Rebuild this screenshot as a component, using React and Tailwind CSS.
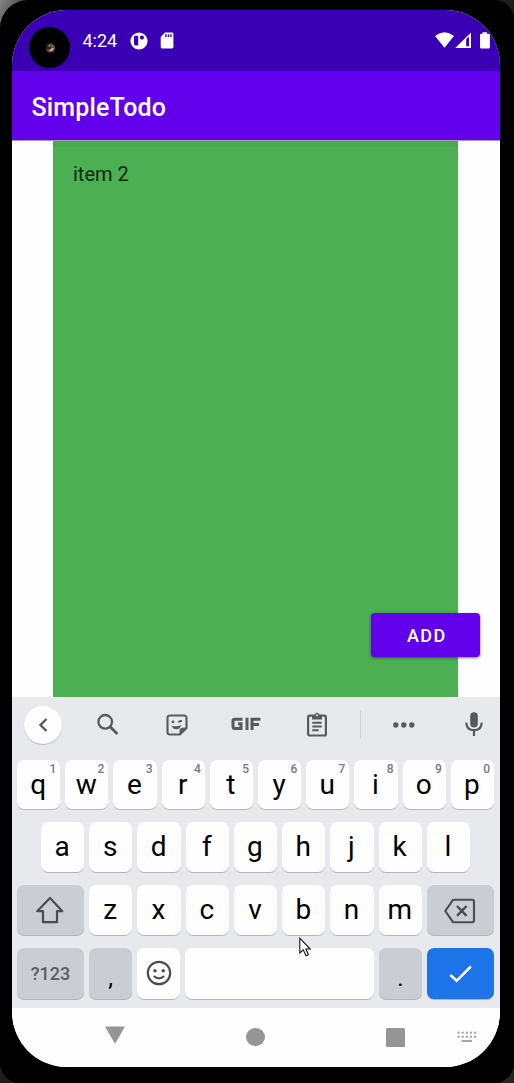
import React from "react";

function Key({ children, hint, tone = "bg-[#fefefe]", size = "flex-1" }) {
  return (
    <div className={`relative flex h-full min-w-0 items-center justify-center rounded-[7px] text-[28px] text-black shadow-[0_1px_0.5px_#b5b6bb] ${tone} ${size}`}>
      {children}
      {hint && <span className="absolute right-[4px] top-[3px] text-[12px] leading-[13px] font-medium text-[#77787b]">{hint}</span>}
    </div>
  );
}

function Letter({ children }) {
  return <span className="relative -left-[0.5px] leading-none">{children}</span>;
}

function StatusBar() {
  return (
    <div className="flex h-[61px] shrink-0 items-start bg-[#3a00b3] text-white">
      <div className="ml-[17px] mt-[17px] flex h-[41px] w-[41px] shrink-0 items-center justify-center rounded-full bg-black">
        <svg width="12" height="12" viewBox="0 0 12 12">
          <circle cx="6.5" cy="6" r="4.6" fill="#6b5147" />
          <circle cx="4.5" cy="5" r="2.6" fill="#282022" />
          <path d="M5 8.5Q8 10 10 6.5L8 6Z" fill="#d9ad91" />
          <circle cx="5.5" cy="4" r="1" fill="#a58b7c" />
        </svg>
      </div>
      <span className="ml-[12.5px] mt-[20px] w-[36px] text-[18px] leading-[21px]">4:24</span>
      <svg className="ml-[11.5px] mt-[22px]" width="18" height="18" viewBox="0 0 18 18">
        <circle cx="9" cy="9" r="8.6" fill="white" />
        <path d="M4 5.2Q4 3.8 5.4 3.8H8.2V13.5H5.8Q4 13.5 4 11.7Z" fill="#3a00b3" />
        <circle cx="11.9" cy="5.6" r="2.1" fill="#3a00b3" />
      </svg>
      <svg className="ml-[12px] mt-[22px]" width="15" height="18" viewBox="0 0 15 18">
        <path d="M5 .6H12Q13.4 .6 13.4 2V15Q13.4 16.4 12 16.4H2Q.7 16.4 .7 15V5Z" fill="white" />
        <path d="M5.9 2.3V5M8.4 2.3V5M10.9 2.3V5" stroke="#3a00b3" strokeWidth="1.4" />
      </svg>
      <svg className="ml-auto mr-[9px] mt-[22px]" width="57" height="18" viewBox="0 0 57 18">
        <path d="M1 4Q10.5-3.3 20 4L10.5 15.8Z" fill="white" />
        <path d="M21.2 16L37 .4V16Z" fill="white" />
        <path d="M32.2 7.2L35 4.5V14.3H32.2Z" fill="#3a00b3" />
        <path d="M48.5.3H53V1.7H54.7Q55.9 1.7 55.9 2.9V15.3Q55.9 16.5 54.7 16.5H47.2Q46 16.5 46 15.3V2.9Q46 1.7 47.2 1.7H48.5Z" fill="white" />
      </svg>
    </div>
  );
}

function Suggestions() {
  return (
    <div className="flex h-[55px] items-center text-[#58595b]">
      <div className="ml-[12px] flex h-[38px] w-[38px] items-center justify-center rounded-full bg-[#fefefe] shadow-[0_1px_1px_#b8b9bd]">
        <svg width="20" height="20" viewBox="0 0 20 20" fill="none" stroke="currentColor" strokeWidth="2.4"><path d="M13.5 4L7.5 10L13.5 16" /></svg>
      </div>
      <svg className="ml-[34px]" width="23" height="23" viewBox="0 0 23 23" fill="none" stroke="currentColor">
        <circle cx="9.2" cy="8.8" r="6.8" strokeWidth="2.3" /><path d="M14.1 13.7L21.4 21" strokeWidth="2.8" />
      </svg>
      <svg className="ml-[47px]" width="22" height="22" viewBox="0 0 22 22" fill="none" stroke="currentColor">
        <path d="M4 1.5H18Q20.5 1.5 20.5 4V14L14 20.5H4Q1.5 20.5 1.5 18V4Q1.5 1.5 4 1.5Z" strokeWidth="2.1" />
        <path d="M14 20.5V16.5Q14 14.2 16.3 14.2H20.5Z" fill="currentColor" strokeWidth="1" />
        <circle cx="7" cy="7.8" r="1.4" fill="currentColor" stroke="none" />
        <path d="M12.5 8.3Q14 6.3 16 7.3" strokeWidth="2" />
        <path d="M5.5 11.7Q10.5 13 15.2 11Q14 15.2 10.6 15.2Q7 15.2 5.5 11.7Z" fill="currentColor" stroke="none" />
      </svg>
      <svg className="relative -top-px ml-[43px]" width="30" height="14" viewBox="0 0 30 14" fill="none" stroke="currentColor" strokeWidth="3">
        <path d="M11.5 2.2H4Q2 2.2 2 4V9.5Q2 11.5 4 11.5H10V6.7H7" /><path d="M16 .7V13" /><path d="M21 13V2.2H29.5M21 7.4H28" />
      </svg>
      <svg className="ml-[45px]" width="22" height="25" viewBox="0 0 22 25" fill="none" stroke="currentColor">
        <rect x="2.1" y="3.7" width="17.8" height="19.8" rx="1.5" strokeWidth="2.2" />
        <path d="M6 3H8.5Q9 .8 11 .8T13.5 3H16V7.5H6Z" fill="currentColor" stroke="none" />
        <circle cx="11" cy="3.3" r="1" fill="#e8e9ed" stroke="none" />
        <path d="M6.3 10.7H15.7M6.3 14.5H15.7M6.3 18.3H12.7" strokeWidth="2" />
      </svg>
      <span className="ml-[32px] h-[28px] w-px bg-[#d0d1d6]" />
      <svg className="ml-[32px]" width="22" height="6" viewBox="0 0 22 6" fill="currentColor">
        <circle cx="2.8" cy="3" r="2.7" /><circle cx="10.8" cy="3" r="2.7" /><circle cx="18.8" cy="3" r="2.7" />
      </svg>
      <svg className="relative -top-[0.5px] ml-[50px]" width="18" height="26" viewBox="0 0 18 26" fill="none" stroke="currentColor">
        <rect x="5.2" y="1.3" width="7.6" height="15.2" rx="3.8" fill="currentColor" stroke="none" />
        <path d="M1.3 11.5Q1.3 19.2 9 19.2T16.7 11.5M9 19V25" strokeWidth="2.2" />
      </svg>
    </div>
  );
}

function Keyboard() {
  return (
    <div className="h-[311px] shrink-0 bg-[#e8e9ed] pl-[5px] pr-[6px]">
      <div className="-ml-[5px] -mr-[6px]"><Suggestions /></div>
      <div className="mt-[8px] flex h-[49px] gap-[5px]">
        {"qwertyuiop".split("").map((c, i) => <Key key={c} hint={String((i + 1) % 10)}><Letter>{c}</Letter></Key>)}
      </div>
      <div className="mt-[13px] flex h-[50px] gap-[5px] px-[24px]">
        {"asdfghjkl".split("").map((c) => <Key key={c}><Letter>{c}</Letter></Key>)}
      </div>
      <div className="mt-[13px] flex h-[50px] gap-[5px]">
        <Key tone="bg-[#cbcdd4]" size="w-[67px] shrink-0">
          <svg className="relative -left-px" width="30" height="28" viewBox="0 0 30 28" fill="none" stroke="#4b4c4f" strokeWidth="2.2" strokeLinejoin="round"><path d="M15 2L27.3 15.2H22V26.2H8V15.2H2.2Z" /></svg>
        </Key>
        {"zxcvbnm".split("").map((c) => <Key key={c}><Letter>{c}</Letter></Key>)}
        <Key tone="bg-[#cbcdd4]" size="w-[67px] shrink-0">
          <svg className="relative top-px" width="32" height="26" viewBox="0 0 32 26" fill="none" stroke="#4b4c4f" strokeWidth="2.1" strokeLinejoin="round"><path d="M9 1.8H28Q30 1.8 30 3.8V22.2Q30 24.2 28 24.2H9L1.3 13Z" /><path d="M13 8L22.5 17.8M22.5 8L13 17.8" strokeWidth="2.4" /></svg>
        </Key>
      </div>
      <div className="mt-[13px] flex h-[51px] gap-[5px]">
        <Key tone="bg-[#cbcdd4]" size="w-[67px] shrink-0"><span className="text-[18px] font-medium text-[#5b5c5f]">?123</span></Key>
        <Key tone="bg-[#cbcdd4]" size="w-[43px] shrink-0"><span className="relative top-[4px] text-[24px] leading-none">,</span></Key>
        <Key size="w-[43px] shrink-0">
          <svg className="relative -top-[0.5px]" width="26" height="26" viewBox="0 0 26 26" fill="none" stroke="#4b4c4f" strokeWidth="2.2"><circle cx="13" cy="13" r="11.2" /><g fill="#4b4c4f" stroke="none"><circle cx="9" cy="10.8" r="1.7" /><circle cx="17.2" cy="10.8" r="1.7" /></g><path d="M7.8 16Q13 20.7 18.2 16" strokeWidth="2" /></svg>
        </Key>
        <Key />
        <Key tone="bg-[#cbcdd4]" size="w-[43px] shrink-0"><span className="relative top-[4px] text-[24px] leading-none">.</span></Key>
        <Key tone="bg-[#1d73e8]" size="w-[67px] shrink-0">
          <svg width="24" height="20" viewBox="0 0 24 20" fill="none" stroke="white" strokeWidth="2.5"><path d="M1.3 11L7.7 16.8L21.8 2.5" /></svg>
        </Key>
      </div>
    </div>
  );
}

function NavBar() {
  return (
    <div className="flex flex-1 items-start bg-[#fefefe] text-[#959595]">
      <svg className="ml-[92px] mt-[18px]" width="22" height="20" viewBox="0 0 22 20"><path d="M1.8 1H20.2L11 17Z" fill="currentColor" stroke="currentColor" strokeLinejoin="round" /></svg>
      <span className="ml-[120px] mt-[19.5px] h-[18.5px] w-[18.5px] rounded-full bg-[#959595]" />
      <span className="ml-[121.5px] mt-[19.5px] h-[19px] w-[19px] rounded-[1.5px] bg-[#959595]" />
      <svg className="ml-[51.5px] mt-[22px]" width="20" height="13" viewBox="0 0 20 13" fill="none" stroke="#a5a5aa"><path d="M.5 2.7H20M.5 6.7H20" strokeWidth="2" strokeDasharray="2.2 1.9" /><path d="M4.5 11H15" strokeWidth="2" /></svg>
    </div>
  );
}

export default function App() {
  return (
    <div className="relative h-[1083px] w-[514px] overflow-hidden bg-linear-to-br from-[#858585] from-0% via-[#161616] via-5% to-[#242424] font-['Roboto',sans-serif]">
      <div className="h-full rounded-[20px] rounded-tl-[28px] bg-black pl-[12px] pr-[14px] pt-[10px]">
        <div className="flex h-[1057px] w-[488px] flex-col overflow-hidden rounded-[55px] bg-[#fefefe]">
          <StatusBar />
          <header className="flex h-[69px] shrink-0 items-center bg-[#6200ec] pl-[19.5px] pt-[5px] text-[25px] font-medium tracking-[0.15px] text-white">SimpleTodo</header>
          <main className="flex h-[557px] shrink-0 justify-start border-t border-[#a29bb4] pl-[41px]">
            <div className="w-[405px] border-t-[6px] border-[#4ba74f] bg-[#4caf51] pl-[20px] pt-[14.5px] text-[20px] leading-[24px] text-[#10290f]">item 2</div>
          </main>
          <Keyboard />
          <NavBar />
        </div>
      </div>
      <button className="absolute left-[371.4px] top-[612.5px] h-[44.5px] w-[109px] rounded-[4px] bg-[#6200ec] pl-[2px] pt-px text-[18px] font-medium tracking-[1.5px] text-white shadow-[0_1px_3px_rgba(0,0,0,0.5)]">ADD</button>
      <svg className="absolute left-[299px] top-[937px]" width="14" height="22" viewBox="0 0 14 22"><path d="M.8 1.2V16L4.3 12.8L7 18.8L9.4 17.7L6.9 12H11.2Z" fill="white" stroke="#101018" strokeWidth="1.1" /></svg>
    </div>
  );
}
